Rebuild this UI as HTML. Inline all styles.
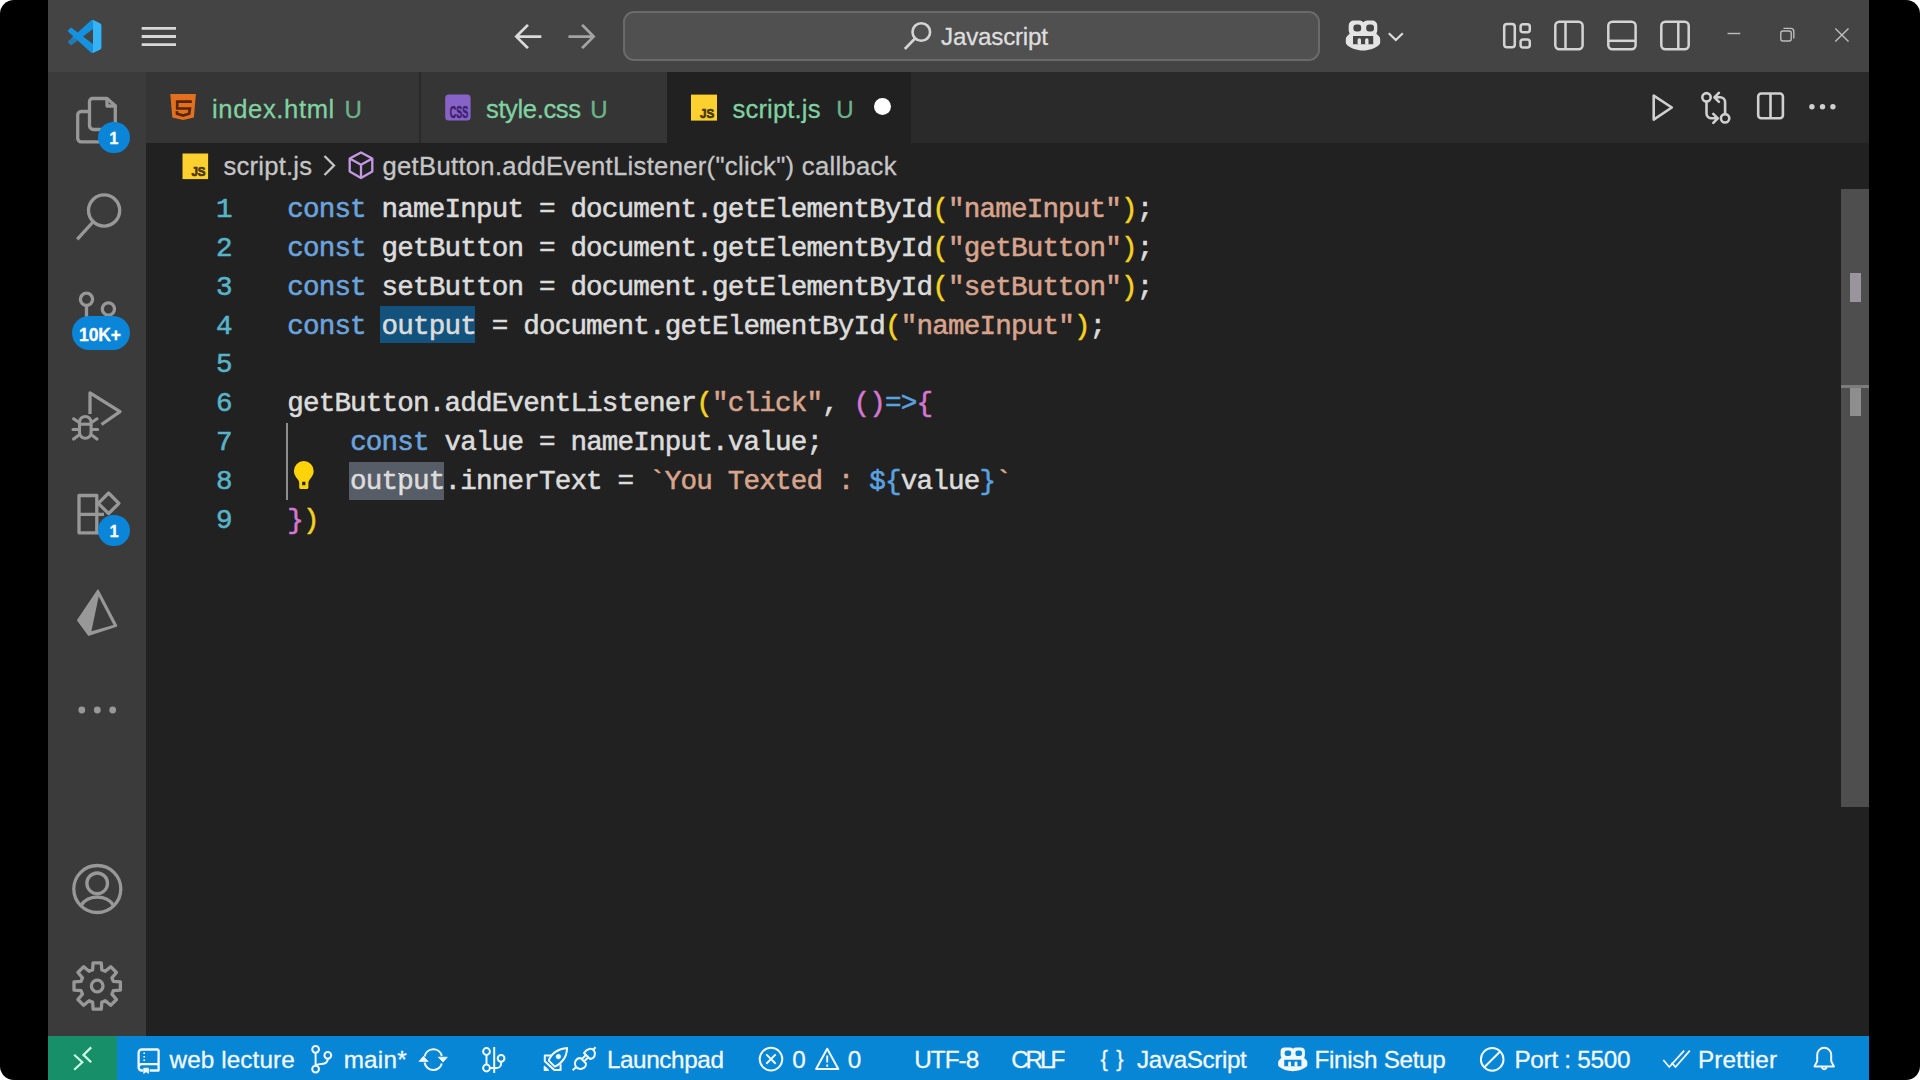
<!DOCTYPE html>
<html lang="en">
<head>
<meta charset="utf-8">
<title>script.js - web lecture - Visual Studio Code</title>
<style>
*{box-sizing:border-box;margin:0;padding:0}
html,body{width:1920px;height:1080px;overflow:hidden;background:#fff}
body{font-family:"Liberation Sans",sans-serif;position:relative}
#frame{position:absolute;left:0;top:0;width:1920px;height:1080px;background:#000;border-radius:14px;overflow:hidden}
.abs{position:absolute}
svg{position:absolute;left:0;top:0;overflow:visible}
.t{position:absolute;white-space:pre;line-height:1;-webkit-text-stroke:.3px currentColor}
#title{position:absolute;left:48px;top:0;width:1821px;height:72.2px;background:#444444}
#search{position:absolute;left:623.3px;top:11px;width:696.6px;height:50px;border-radius:11px;background:#505050;border:2px solid #6a6a6a}
#act{position:absolute;left:48px;top:72px;width:98.4px;height:964px;background:#3b3b3b}
#tabs{position:absolute;left:146.4px;top:72px;width:1722.6px;height:71.5px;background:#2a2a2a}
.tab{position:absolute;top:72px;height:71.5px;background:#353535}
.tab.active{background:#212121}
#editor{position:absolute;left:146.4px;top:143px;width:1722.6px;height:893px;background:#212121}
.ln,.code{position:absolute;font-family:"Liberation Mono",monospace;font-size:27.6px;letter-spacing:-.826px;line-height:38.85px;height:38.85px;white-space:pre;-webkit-text-stroke:.55px currentColor}
.ln{left:147px;width:84.8px;text-align:right;color:#58b4c8}
.code{left:287.2px;color:#dcdcdc}
.k{color:#6ba3dc}.s{color:#d8a48d}.y{color:#f5d322}.p{color:#d678d2}.b{color:#5aa2e0}
#status{position:absolute;left:48px;top:1035.5px;width:1821px;height:44.5px;background:#0786d5}
#remote{position:absolute;left:48px;top:1035.5px;width:68.9px;height:44.5px;background:#178f68}
.badge{position:absolute;background:#0a85d7;border-radius:17px}
</style>
</head>
<body>
<div id="frame">
<div id="title"></div><div id="search"></div>
<div id="act"></div>
<div id="tabs"></div>
<div class="tab" style="left:146.4px;width:272.9px"></div>
<div class="tab" style="left:420.6px;width:246.1px"></div>
<div class="tab active" style="left:666.7px;width:244px"></div>
<div id="editor"></div>
<div id="status"></div><div id="remote"></div>
<div class="abs" style="left:380px;top:306px;width:95px;height:37px;background:#13527c"></div>
<div class="abs" style="left:349px;top:461.5px;width:95px;height:38px;background:#575d66"></div>
<div class="abs" style="left:286px;top:423px;width:2px;height:77px;background:#8e8e8e"></div>
<div class="abs" style="left:1841px;top:189px;width:28px;height:618px;background:#4e4e4e"></div>
<div class="abs" style="left:1850px;top:273px;width:11px;height:29px;background:#9a949c"></div>
<div class="abs" style="left:1841px;top:385px;width:28px;height:3px;background:#7c7c7c"></div>
<div class="abs" style="left:1850px;top:388px;width:11px;height:28px;background:#8e8e8e"></div>
<div class="ln" style="top:191.00px">1</div>
<div class="code" style="top:191.00px"><span class="k">const</span> nameInput = document.getElementById<span class="y">(</span><span class="s">"nameInput"</span><span class="y">)</span>;</div>
<div class="ln" style="top:229.85px">2</div>
<div class="code" style="top:229.85px"><span class="k">const</span> getButton = document.getElementById<span class="y">(</span><span class="s">"getButton"</span><span class="y">)</span>;</div>
<div class="ln" style="top:268.70px">3</div>
<div class="code" style="top:268.70px"><span class="k">const</span> setButton = document.getElementById<span class="y">(</span><span class="s">"setButton"</span><span class="y">)</span>;</div>
<div class="ln" style="top:307.55px">4</div>
<div class="code" style="top:307.55px"><span class="k">const</span> output = document.getElementById<span class="y">(</span><span class="s">"nameInput"</span><span class="y">)</span>;</div>
<div class="ln" style="top:346.40px">5</div>
<div class="ln" style="top:385.25px">6</div>
<div class="code" style="top:385.25px">getButton.addEventListener<span class="y">(</span><span class="s">"click"</span>, <span class="p">()</span><span class="b">=&gt;</span><span class="p">{</span></div>
<div class="ln" style="top:424.10px">7</div>
<div class="code" style="top:424.10px">    <span class="k">const</span> value = nameInput.value;</div>
<div class="ln" style="top:462.95px">8</div>
<div class="code" style="top:462.95px">    output.innerText = <span class="s">`You Texted : </span><span class="b">${</span>value<span class="b">}</span><span class="s">`</span></div>
<div class="ln" style="top:501.80px">9</div>
<div class="code" style="top:501.80px"><span class="p">}</span><span class="y">)</span></div>
<span class="t" style="left:941.0px;top:25.1px;font-size:24.2px;color:#dedede;letter-spacing:-0.210px;">Javascript</span>
<span class="t" style="left:212.0px;top:96.5px;font-size:25.6px;color:#80d2a1;letter-spacing:0.627px;">index.html</span>
<span class="t" style="left:344.4px;top:97.9px;font-size:24px;color:#6db38c;letter-spacing:0.000px;">U</span>
<span class="t" style="left:486.0px;top:96.5px;font-size:25.6px;color:#80d2a1;letter-spacing:-0.393px;">style.css</span>
<span class="t" style="left:590.2px;top:97.9px;font-size:24px;color:#6db38c;letter-spacing:0.000px;">U</span>
<span class="t" style="left:732.5px;top:96.5px;font-size:25.6px;color:#80d2a1;letter-spacing:0.156px;">script.js</span>
<span class="t" style="left:836.2px;top:97.9px;font-size:24px;color:#6db38c;letter-spacing:0.000px;">U</span>
<div class="abs" style="left:873.7px;top:97.6px;width:17px;height:17px;border-radius:50%;background:#fff"></div>
<span class="t" style="left:223.6px;top:154.3px;font-size:25.6px;color:#c6c6c6;letter-spacing:0.206px;">script.js</span>
<span class="t" style="left:382.5px;top:154.3px;font-size:25.6px;color:#c6c6c6;letter-spacing:0.315px;">getButton.addEventListener("click") callback</span>
<span class="t" style="left:169.5px;top:1047.9px;font-size:24.3px;color:#f2f8fd;letter-spacing:0.105px;">web lecture</span>
<span class="t" style="left:343.7px;top:1047.9px;font-size:24.3px;color:#f2f8fd;letter-spacing:0.194px;">main*</span>
<span class="t" style="left:606.9px;top:1047.9px;font-size:24.3px;color:#f2f8fd;letter-spacing:-0.396px;">Launchpad</span>
<span class="t" style="left:792.3px;top:1047.9px;font-size:24.3px;color:#f2f8fd;letter-spacing:0.000px;">0</span>
<span class="t" style="left:847.8px;top:1047.9px;font-size:24.3px;color:#f2f8fd;letter-spacing:0.000px;">0</span>
<span class="t" style="left:914.2px;top:1047.9px;font-size:24.3px;color:#f2f8fd;letter-spacing:-0.961px;">UTF-8</span>
<span class="t" style="left:1011.2px;top:1047.9px;font-size:24.3px;color:#f2f8fd;letter-spacing:-3.118px;">CRLF</span>
<span class="t" style="left:1137.1px;top:1047.9px;font-size:24.3px;color:#f2f8fd;letter-spacing:-0.415px;">JavaScript</span>
<span class="t" style="left:1314.5px;top:1047.9px;font-size:24.3px;color:#f2f8fd;letter-spacing:-0.342px;">Finish Setup</span>
<span class="t" style="left:1514.4px;top:1047.9px;font-size:24.3px;color:#f2f8fd;letter-spacing:-0.268px;">Port : 5500</span>
<span class="t" style="left:1697.9px;top:1047.9px;font-size:24.3px;color:#f2f8fd;letter-spacing:0.112px;">Prettier</span>
<span class="t" style="left:1100.4px;top:1047.9px;font-size:22px;color:#f2f8fd;letter-spacing:8.597px;">{}</span><svg id="icons" width="1920" height="1080" viewBox="0 0 1920 1080" fill="none" font-family="Liberation Sans, sans-serif">
<!-- ===== TITLE BAR ===== -->
<g transform="translate(68,19.800) scale(0.333)">
  <path fill="#1592df" fill-rule="evenodd" d="M70.9119 99.3171C72.4869 99.9307 74.2828 99.8914 75.8725 99.1264L96.4608 89.2197C98.6242 88.1787 100 85.9892 100 83.5872V16.4133C100 14.0113 98.6243 11.8218 96.4609 10.7808L75.8725 0.873756C73.7862 -0.130129 71.3446 0.11576 69.5135 1.44695C69.252 1.63711 69.0028 1.84943 68.769 2.08341L29.3551 38.0415L12.1872 25.0096C10.589 23.7965 8.35363 23.8959 6.86933 25.2461L1.36303 30.2549C-0.452552 31.9064 -0.454633 34.7627 1.35853 36.417L16.2471 50.0001L1.35853 63.5832C-0.454633 65.2374 -0.452552 68.0938 1.36303 69.7453L6.86933 74.7541C8.35363 76.1043 10.589 76.2037 12.1872 74.9905L29.3551 61.9587L68.769 97.9167C69.3925 98.5406 70.1246 99.0104 70.9119 99.3171ZM75.0152 27.2989L45.1091 50.0001L75.0152 72.7012V27.2989Z"/>
  <path fill="#444444" fill-opacity="0.300" d="M-1 58L20 54L31 62L12 78L-1 72Z"/>
  <path fill="#35b3f4" d="M75 0.5C75.3 0.6 75.6 0.7 75.87 0.87L96.46 10.78C98.62 11.82 100 14.01 100 16.41V83.59C100 85.99 98.62 88.18 96.46 89.22L75.87 99.13C75.6 99.26 75.3 99.4 75 99.5Z"/>
</g>
<path stroke="#d8d8d8" stroke-width="2.800" d="M141.700 28.300H176M141.700 36.500H176M141.700 44.700H176"/>
<path stroke="#dadada" stroke-width="2.700" stroke-linecap="square" d="M527 25.800L516.300 36.600L527 47.200M517 36.600H540"/>
<path stroke="#a4a4a4" stroke-width="2.700" stroke-linecap="square" d="M583 25.800L593.600 36.600L583 47.200M593 36.600H569.800"/>
<g stroke="#d4d4d4" stroke-width="2.600">
  <circle cx="921.300" cy="32" r="8.800"/>
  <path d="M915 38.500L904.800 49"/>
</g>
<!-- copilot (title) -->
<g fill="#e4e4e4" fill-rule="evenodd">
  <path d="M1354.500 20.600h5.300a5 5 0 0 1 3.600 1.700a5 5 0 0 1 3.600 -1.700h5.300a5 5 0 0 1 5 5v4.800a5 5 0 0 1 -1 3l2.900 3.200a4 4 0 0 1 1 2.600v3.300a3 3 0 0 1 -1.200 2.400c-4 3.200 -9.500 5.500 -16 5.500s-12 -2.300 -16 -5.500a3 3 0 0 1 -1.200 -2.400v-3.300a4 4 0 0 1 1 -2.600l2.900 -3.200a5 5 0 0 1 -1 -3v-4.800a5 5 0 0 1 5 -5z
  M1356.400 24.400a3 3 0 0 0 -3 3v1a3 3 0 0 0 3 3h1.800a3 3 0 0 0 3 -3v-1a3 3 0 0 0 -3 -3z
  M1369.200 24.400a3 3 0 0 0 -3 3v1a3 3 0 0 0 3 3h1.800a3 3 0 0 0 3 -3v-1a3 3 0 0 0 -3 -3z
  M1353 36h20.200v8.200h-20.200z"/>
  <rect x="1357.600" y="38.300" width="3.400" height="6.600" rx="1.600"/>
  <rect x="1365.100" y="38.300" width="3.400" height="6.600" rx="1.600"/>
</g>
<path stroke="#dcdcdc" stroke-width="2.200" d="M1388.800 33.200L1395.800 40L1402.800 33.200"/>
<g stroke="#d4d4d4" stroke-width="2.500">
  <rect x="1504.200" y="24" width="10.600" height="23.300" rx="2.800"/>
  <rect x="1520.600" y="24.200" width="9.200" height="8" rx="2.500"/>
  <rect x="1520.600" y="39.400" width="9.200" height="8" rx="2.500"/>
  <rect x="1555.300" y="21.800" width="27.300" height="27.400" rx="4"/>
  <path d="M1565.500 21.800V49.200"/>
  <rect x="1608.300" y="21.800" width="27.300" height="27.400" rx="4"/>
  <path d="M1608.300 40.800H1635.600"/>
  <rect x="1661.300" y="21.800" width="27.400" height="27.400" rx="4"/>
  <path d="M1678.300 21.800V49.200"/>
</g>
<g stroke="#bdbdbd" stroke-width="1.400">
  <path d="M1727.500 33.500H1740.300"/>
  <rect x="1780.800" y="31" width="10.400" height="10" rx="2"/>
  <path d="M1783.500 28.400h7.300a3 3 0 0 1 3 3v7"/>
  <path d="M1835.300 28.500L1848.500 41.600M1848.500 28.500L1835.300 41.600"/>
</g>

<!-- ===== ACTIVITY BAR ===== -->
<g stroke="#989898" stroke-width="3.300" stroke-linejoin="round" stroke-linecap="round">
  <!-- files -->
  <path d="M92.500 98.500h14.500l8.300 7.300v19.700a4 4 0 0 1 -4 4h-17.800a4 4 0 0 1 -4 -4v-24a3 3 0 0 1 3 -3z"/>
  <path d="M107 98.800v7.200h8"/>
  <path d="M89.500 111.500h-8.300a3.500 3.500 0 0 0 -3.500 3.500v23.300a3.500 3.500 0 0 0 3.500 3.500h19.500"/>
  <!-- search -->
  <circle cx="104.100" cy="210.500" r="15.600"/>
  <path d="M93 222L77.200 239.400" stroke-linecap="butt"/>
  <!-- source control -->
  <circle cx="86.500" cy="299.300" r="6.100"/>
  <circle cx="108.400" cy="309" r="6.100"/>
  <path d="M86.500 305.500V320" stroke-linecap="butt"/>
  <!-- run and debug -->
  <path d="M90 414V392.800L120 411.700L101.500 424.500" stroke-linecap="butt"/>
</g>
<g stroke="#989898" stroke-width="3.100" stroke-linecap="round">
  <rect x="79.500" y="416.500" width="11.600" height="21.800" rx="5.800"/>
  <path d="M79.500 424.200h11.600" stroke-linecap="butt"/>
  <path d="M78.800 422.300L73.600 418.800M91.800 422.300L97 418.800M78.800 429.500H73M91.800 429.500H97.600M79 435L73.600 439M91.600 435L97 439"/>
</g>
<g stroke="#989898" stroke-width="3.300" stroke-linejoin="round">
  <!-- extensions -->
  <path d="M79 495.500h17.800v37.300h-17.800zM79 514.400h25"/>
  <path d="M96.800 532.800h5"/>
  <path d="M108.600 493L118.900 503.300L108.600 513.600L98.300 503.300z"/>
</g>
<!-- prisma-like -->
<path fill="#989898" stroke="#989898" stroke-width="2" stroke-linejoin="round" d="M98 590.600L78 620.200L88.800 634.900L116.300 625.800z"/>
<path fill="#3b3b3b" d="M98.700 596.400L113.500 625L91.400 631.300z"/>
<g fill="#989898">
  <circle cx="81.800" cy="710" r="3.400"/><circle cx="97.300" cy="710" r="3.400"/><circle cx="112.700" cy="710" r="3.400"/>
</g>
<g stroke="#989898" stroke-width="3.300" stroke-linejoin="round">
  <!-- account -->
  <circle cx="97.300" cy="889" r="23.500"/>
  <circle cx="97.200" cy="883.300" r="10.300"/>
  <path d="M81.200 905.500a17.500 14 0 0 1 32.200 0"/>
  <!-- gear -->
  <path d="M92.600 969.900L93.100 962.800L101.300 962.800L101.800 969.900A16.800 16.800 0 0 1 105.300 971.300L110.700 966.700L116.500 972.500L111.900 977.900A16.800 16.800 0 0 1 113.300 981.400L120.400 981.900L120.400 990.100L113.300 990.600A16.800 16.800 0 0 1 111.900 994.100L116.500 999.500L110.700 1005.300L105.300 1000.700A16.800 16.800 0 0 1 101.800 1002.100L101.300 1009.200L93.100 1009.200L92.600 1002.100A16.800 16.800 0 0 1 89.100 1000.700L83.700 1005.300L77.900 999.500L82.500 994.100A16.800 16.800 0 0 1 81.100 990.600L74.000 990.100L74.000 981.900L81.100 981.400A16.800 16.800 0 0 1 82.500 977.900L77.900 972.500L83.700 966.700L89.100 971.300A16.800 16.800 0 0 1 92.600 969.900Z"/>
  <circle cx="97.200" cy="986" r="5.800"/>
</g>

<!-- ===== TABS ===== -->
<!-- html5 -->
<path fill="#e2701f" d="M170.300 94h25.600l-2 23.400l-10.800 2.600l-10.800 -2.600z"/>
<path stroke="#5a2407" stroke-width="2.700" d="M191.800 101.600h-14.600v6.900h12.700l-0.800 5.300l-6 1.800l-6 -1.800l-0.300 -2.600"/>
<!-- css -->
<rect x="445.200" y="94.400" width="25.400" height="26" rx="3.500" fill="#8763c7"/>
<text x="449.700" y="117.500" font-size="17" font-weight="bold" fill="#3b1f6d" stroke="#3b1f6d" stroke-width="0.500" textLength="18.600" lengthAdjust="spacingAndGlyphs">CSS</text>
<!-- js (tab) -->
<rect x="691" y="94.600" width="26" height="26" fill="#fcd02e"/>
<text x="700" y="117.600" font-size="13.200" font-weight="bold" fill="#4a3600" stroke="#4a3600" stroke-width="0.700" textLength="14.200" lengthAdjust="spacingAndGlyphs">JS</text>
<!-- tab actions -->
<g stroke="#d0d0d0" stroke-width="2.600" stroke-linejoin="round">
  <path d="M1653.700 95.600V119.600L1671.800 107.500z"/>
  <circle cx="1706.500" cy="97.300" r="4.200"/>
  <circle cx="1725.100" cy="118.300" r="4.200"/>
  <path d="M1706.500 101.600V113.300a5 5 0 0 0 5 5h5.500M1713.300 113.800l4.500 4.500l-4.500 4.500" stroke-linecap="round"/>
  <path d="M1725.100 114V102.300a5 5 0 0 0 -5 -5h-5.500M1718.900 92.800l-4.500 4.500l4.500 4.500" stroke-linecap="round"/>
  <rect x="1758.200" y="93.500" width="24.700" height="24.800" rx="3"/>
  <path d="M1770.500 93.500V118.300"/>
</g>
<g fill="#d0d0d0"><circle cx="1811.900" cy="106.800" r="2.700"/><circle cx="1822.500" cy="106.800" r="2.700"/><circle cx="1832.900" cy="106.800" r="2.700"/></g>

<!-- ===== BREADCRUMBS ===== -->
<rect x="182.500" y="153.500" width="25.600" height="25.600" fill="#fcd02e"/>
<text x="191.400" y="176.200" font-size="13.200" font-weight="bold" fill="#4a3600" stroke="#4a3600" stroke-width="0.700" textLength="14.200" lengthAdjust="spacingAndGlyphs">JS</text>
<path stroke="#c4c4c4" stroke-width="2.300" d="M324.500 156L334 165.500L324.500 175"/>
<path stroke="#c598e6" stroke-width="2.300" stroke-linejoin="round" d="M361 152.500L372.300 158.600V171.600L361 178L349.700 171.600V158.600zM349.700 158.600L361 164.800L372.300 158.600M361 164.800V178"/>

<!-- ===== EDITOR ===== -->
<!-- lightbulb -->
<path fill="#ffd30a" fill-rule="evenodd" d="M303.800 461a9.900 9.900 0 0 0 -9.900 9.900c0 3.600 2 6 3.600 8c1 1.300 1.700 2.500 1.700 4v4.600a1.600 1.600 0 0 0 1.600 1.600h6a1.600 1.600 0 0 0 1.600 -1.600v-4.600c0 -1.500 0.700 -2.700 1.700 -4c1.600 -2 3.600 -4.400 3.600 -8a9.900 9.900 0 0 0 -9.900 -9.900zM302.200 481.800h3.200v3.400h-3.200z"/>
<!-- I-beam cursor -->
<path stroke="#e6e6e6" stroke-width="1.400" d="M401 474V494.500M398.200 473.600h2M402 473.600h2.200"/>

<!-- ===== STATUS BAR ===== -->
<g stroke="#ccffe2" stroke-width="2.200">
  <path d="M74.200 1054.700L82.300 1062.200L74.200 1069.800M91.200 1047.400L83.500 1054.900L91.200 1062.200"/>
</g>
<g stroke="#f2f8fd" stroke-width="2" stroke-linejoin="round">
  <!-- repo -->
  <path d="M158.600 1049.500H141.800a3.200 3.200 0 0 0 -3.200 3.200V1067.300a3.200 3.200 0 0 0 3.200 3.200H143M149.600 1070.500H158.600V1049.500M158.600 1064.200H141.800a3.200 3.200 0 0 0 -3.200 3.100" stroke-width="2.300"/>
  <path d="M143.700 1068.200h4.800v5.200l-2.400 -1.700l-2.400 1.700z" fill="#f2f8fd" stroke-width="0.800"/>
  <path d="M144.200 1052.500v1.500M144.200 1056.100v1.500M144.200 1059.600v1.500" stroke-width="1.700"/>
  <!-- branch -->
  <circle cx="315.600" cy="1049.300" r="3.400"/>
  <circle cx="315.600" cy="1069.100" r="3.400"/>
  <circle cx="327.800" cy="1055.300" r="3.400"/>
  <path d="M315.600 1052.700V1065.700M327.800 1058.700c0 4 -3 5 -6 5.300c-3 0.300 -6.200 0.500 -6.200 2"/>
  <!-- sync -->
  <path d="M424.600 1056.500a8.800 8.800 0 0 1 17.200 -0.500M441.800 1063.500a8.800 8.800 0 0 1 -17.200 -1"/>
  <path d="M438.300 1057.200h9l-4.300 4.900zM419.100 1061.400h9l-4.700 -5.100z" fill="#f2f8fd" stroke-width="0.800"/>
  <!-- git graph -->
  <circle cx="486.500" cy="1051.500" r="3.400"/>
  <circle cx="486.500" cy="1068" r="3.400"/>
  <circle cx="501.100" cy="1058.300" r="3.400"/>
  <path d="M494.200 1047V1073M486.500 1055V1064.600M490 1068H496.500a4.600 4.600 0 0 0 4.600 -4.600V1061.700"/>
  <!-- rocket -->
  <path d="M548.800 1060.600C551 1053.600 558 1048.600 567.100 1047.900C566.900 1057 561.500 1064 554.800 1066.600Z"/>
  <path d="M552 1055.600H544.800V1061.300L554.300 1070.100H560.600V1064.300"/>
  <circle cx="558.400" cy="1056.600" r="2.300" fill="#f2f8fd" stroke-width="0.600"/>
  <path d="M544.300 1066.300V1070.300H548.400z" fill="#f2f8fd" stroke-width="1.200"/>
  <!-- plug -->
  <path d="M584 1053L590.200 1059C594.500 1058.500 596.300 1054 594 1050.500C591.500 1047.700 587 1048.200 584 1053Z"/>
  <path d="M592.800 1050L595.600 1047.300"/>
  <path d="M581 1058.200L586 1063.500C586.500 1067 583 1069.300 579.500 1068.800C575.500 1068 573.800 1064 575.500 1061C576.800 1058.800 579 1057.900 581 1058.200Z"/>
  <path d="M585.900 1055L582.300 1058.600M588.300 1057.200L584.700 1060.800M575.800 1067.500L572.600 1070.300"/>
  <!-- error -->
  <circle cx="771" cy="1059.100" r="11.300"/>
  <path d="M766.300 1054.400l9.400 9.400M775.700 1054.400l-9.400 9.400"/>
  <!-- warning -->
  <path d="M827.200 1048.700L838.300 1069H816.100z"/>
  <path d="M827.200 1055.500v7M827.200 1064.500v2.200" stroke-width="1.900"/>
  <!-- circle slash -->
  <circle cx="1492.200" cy="1059.400" r="11.300"/>
  <path d="M1484.300 1067.300L1500.100 1051.500"/>
  <!-- double check -->
  <path d="M1663.300 1060l6 7l14.800 -16.300M1671.600 1062.600l3.900 4.400l14.300 -16.300" stroke-width="1.800" stroke-linejoin="miter"/>
  <!-- bell -->
  <path d="M1824.200 1047.800a7 7 0 0 0 -7 7v6.400l-2.700 5.200h19.400l-2.700 -5.200v-6.400a7 7 0 0 0 -7 -7zM1821.900 1067.500a2.400 2.400 0 0 0 4.600 0"/>
</g>
<!-- copilot (status) -->
<g transform="translate(1278.300,1047.500) scale(0.850,0.795) translate(-1346,-20.600)" fill="#f2f8fd" fill-rule="evenodd">
  <path d="M1354.500 20.600h5.300a5 5 0 0 1 3.600 1.700a5 5 0 0 1 3.600 -1.700h5.300a5 5 0 0 1 5 5v4.800a5 5 0 0 1 -1 3l2.900 3.200a4 4 0 0 1 1 2.600v3.300a3 3 0 0 1 -1.200 2.400c-4 3.200 -9.500 5.500 -16 5.500s-12 -2.300 -16 -5.500a3 3 0 0 1 -1.200 -2.400v-3.300a4 4 0 0 1 1 -2.600l2.900 -3.200a5 5 0 0 1 -1 -3v-4.800a5 5 0 0 1 5 -5z
  M1356.400 24.400a3 3 0 0 0 -3 3v1a3 3 0 0 0 3 3h1.800a3 3 0 0 0 3 -3v-1a3 3 0 0 0 -3 -3z
  M1369.200 24.400a3 3 0 0 0 -3 3v1a3 3 0 0 0 3 3h1.800a3 3 0 0 0 3 -3v-1a3 3 0 0 0 -3 -3z
  M1353 36h20.200v8.200h-20.200z"/>
  <rect x="1357.600" y="38.300" width="3.400" height="6.600" rx="1.600"/>
  <rect x="1365.100" y="38.300" width="3.400" height="6.600" rx="1.600"/>
</g>
</svg>
<div class="badge" style="left:98.3px;top:121.7px;width:31.4px;height:31.4px"></div>
<span class="t" style="left:109.2px;top:129.9px;font-size:16.5px;color:#fff;letter-spacing:0.000px;font-weight:bold;">1</span>
<div class="badge" style="left:72px;top:316.4px;width:57.5px;height:33.6px"></div>
<span class="t" style="left:79.1px;top:326.9px;font-size:17.5px;color:#fff;letter-spacing:-0.143px;font-weight:bold;">10K+</span>
<div class="badge" style="left:98.4px;top:514.9px;width:31.4px;height:31.4px"></div>
<span class="t" style="left:109.4px;top:523.2px;font-size:16.5px;color:#fff;letter-spacing:0.000px;font-weight:bold;">1</span></div></body></html>
